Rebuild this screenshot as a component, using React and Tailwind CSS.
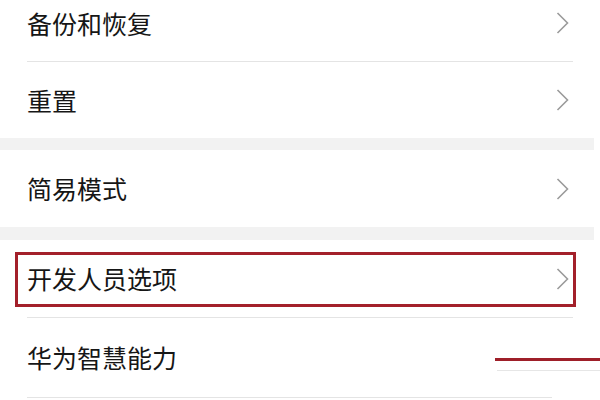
// Settings list crop: system items with a highlighted developer-options row.
const FONT = { fontFamily: '"Noto Sans CJK SC", "Noto Sans", sans-serif' }

function Chevron() {
  return (
    <svg width="13" height="22" viewBox="0 0 13 22" fill="none" aria-hidden>
      <polyline points="1.5,1 11.5,11 1.5,21" stroke="#9b9b9b" strokeWidth="1.6" />
    </svg>
  )
}

function Row({ label, h = 'h-[76px]', chevron = true }) {
  return (
    <div className={`flex items-center justify-between pl-[27px] pr-[31px] ${h}`}>
      <span className="text-[25px] leading-none text-[#161616]">{label}</span>
      {chevron && <Chevron />}
    </div>
  )
}

const Divider = ({ w = 'mx-[27px]' }) => <div className={`h-px bg-[#e4e4e4] ${w}`} />
const Gap = ({ h }) => <div className={`${h} bg-[#f2f2f2] mr-[6px]`} />

export default function App() {
  return (
    <div className="relative w-[600px] h-[400px] overflow-hidden bg-white" style={FONT}>
      <div className="-mt-[15px]">
        <Row label="备份和恢复" />
        <Divider />
        <Row label="重置" />
      </div>
      <Gap h="h-[12px]" />
      <Row label="简易模式" h="h-[77px]" />
      <Gap h="h-[13px]" />
      <Row label="开发人员选项" h="h-[77px]" />
      <Divider />
      <Row label="华为智慧能力" h="h-[79px]" chevron={false} />
      <div className="h-px bg-[#e4e4e4] ml-[27px] w-[525px]" />

      {/* annotation overlays */}
      <div className="absolute left-[15px] top-[252px] w-[561px] h-[55px] border-[3px] border-[#a3202a]" />
      <div className="absolute left-[495px] right-0 top-[358px] h-[3px] bg-[#9e1f29]" />
      <div className="absolute left-[497px] right-0 top-[370px] h-px bg-[#e6e6e6]" />
    </div>
  )
}
